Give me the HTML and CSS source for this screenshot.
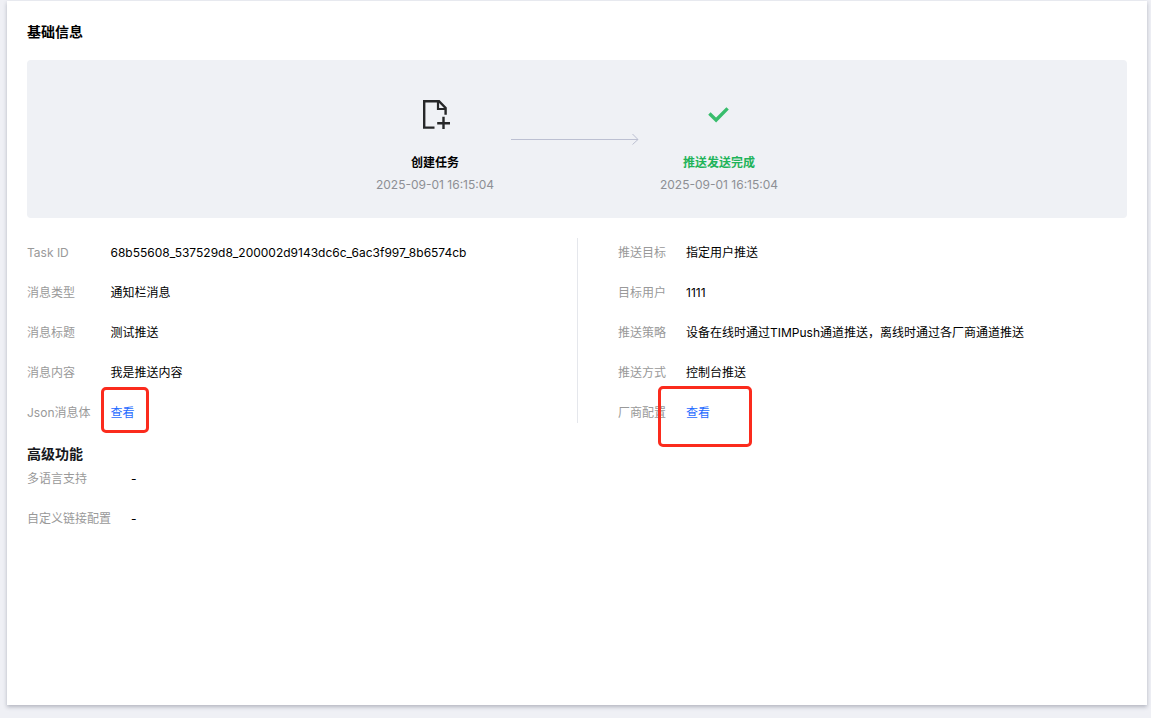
FILE: index.html
```html
<!DOCTYPE html>
<html lang="zh-CN">
  <head>
    <meta charset="UTF-8" />
    <meta name="viewport" content="width=device-width, initial-scale=1.0" />
    <title>基础信息</title>
    <link rel="stylesheet" href="styles.css">
  </head>
  <body>
    <main class="card">
      <h2 class="card-title">基础信息</h2>

      <div class="steps">
        <div class="step">
          <svg class="step-icon" viewBox="0 0 32 32" fill="none" stroke="#262729" stroke-width="2.4">
            <path d="M15.5 30.6H5.2V4.2h14.8L26.6 11v6.8" />
            <path d="M19 4.2v7.8h8" stroke-width="2.2" />
            <path d="M24.5 19.8V32M18.2 26.2h12.8" />
          </svg>
          <div class="step-name">创建任务</div>
          <div class="step-time">2025-09-01 16:15:04</div>
        </div>
        <svg class="steps-arrow" viewBox="0 0 128 12" fill="none" stroke="#bcc0d2">
          <path d="M0 6.5h127M121.5 1l5.5 5.5-5.5 5" />
        </svg>
        <div class="step">
          <svg class="step-icon" viewBox="0 0 32 32" fill="none" stroke="#38bd6c" stroke-width="3.4">
            <path d="M6.4 16.6l6.7 6.4L24.6 11.4" />
          </svg>
          <div class="step-name step-name-done">推送发送完成</div>
          <div class="step-time">2025-09-01 16:15:04</div>
        </div>
      </div>

      <div class="columns">
        <dl class="info">
          <dt>Task ID</dt>
          <dd>68b55608_537529d8_200002d9143dc6c_6ac3f997_8b6574cb</dd>
          <dt>消息类型</dt>
          <dd>通知栏消息</dd>
          <dt>消息标题</dt>
          <dd>测试推送</dd>
          <dt>消息内容</dt>
          <dd>我是推送内容</dd>
          <dt>Json消息体</dt>
          <dd><a class="view-link" href="#">查看<span class="mark mark-small"></span></a></dd>
        </dl>
        <dl class="info info-right">
          <dt>推送目标</dt>
          <dd>指定用户推送</dd>
          <dt>目标用户</dt>
          <dd>1111</dd>
          <dt>推送策略</dt>
          <dd>设备在线时通过TIMPush通道推送，离线时通过各厂商通道推送</dd>
          <dt>推送方式</dt>
          <dd>控制台推送</dd>
          <dt>厂商配置</dt>
          <dd><a class="view-link" href="#">查看<span class="mark mark-large"></span></a></dd>
        </dl>
      </div>

      <h3 class="section-title">高级功能</h3>
      <dl class="info info-advanced">
        <dt>多语言支持</dt>
        <dd>-</dd>
        <dt>自定义链接配置</dt>
        <dd>-</dd>
      </dl>
    </main>
  </body>
</html>
```

FILE: styles.css
```css
* {
  box-sizing: border-box;
}

body {
  margin: 0;
  padding: 1px 4px 13px 7px;
  min-height: 100vh;
  display: flex;
  background-color: #eff0f5;
  color: #000;
  font-family: Inter, "Noto Sans CJK SC", sans-serif;
  font-size: 12px;
  line-height: 20px;
}

.card {
  flex: 1;
  padding: 20px;
  background-color: #fff;
  box-shadow: 0 2px 4px rgba(54, 58, 80, 0.32);
}

.card-title,
.section-title {
  margin: 0;
  font-size: 14px;
  line-height: 22px;
  font-weight: 700;
}

.section-title {
  margin-top: 20px;
  color: #16181d;
}

.steps {
  display: flex;
  justify-content: center;
  align-items: center;
  margin-top: 17px;
  padding: 37px 20px 23px;
  background-color: #eff1f5;
  border-radius: 4px;
}

.step {
  display: flex;
  flex-direction: column;
  align-items: center;
  min-width: 120px;
}

.step-icon {
  width: 32px;
  height: 32px;
  margin-bottom: 24px;
}

.step-name {
  font-weight: 700;
}

.step-name-done {
  color: #1fb45a;
}

.step-time {
  margin-top: 2px;
  color: #8d8f94;
}

.steps-arrow {
  width: 128px;
  height: 12px;
  margin: 0 20px 14px 16px;
}

.columns {
  display: grid;
  grid-template-columns: 1fr 1fr;
  margin-top: 20px;
}

.info {
  display: grid;
  grid-template-columns: max-content 1fr;
  gap: 20px;
  align-content: start;
  margin: 0;
  padding-top: 5px;
}

.info dt {
  color: #999;
}

.info dd {
  margin: 0;
}

.info-right {
  padding-left: 40px;
  border-left: 1px solid #e5e7ec;
}

.info-advanced {
  padding-top: 4px;
}

.view-link {
  position: relative;
  display: inline-block;
  color: #1f6bff;
  text-decoration: none;
}

/* red highlight frames around the links */
.mark {
  position: absolute;
  border: 3px solid #fb2b1d;
  border-radius: 5px;
  pointer-events: none;
}

.mark-small {
  left: -9px;
  top: -16px;
  width: 48px;
  height: 46px;
}

.mark-large {
  left: -28px;
  top: -17px;
  width: 94px;
  height: 61px;
}
```
